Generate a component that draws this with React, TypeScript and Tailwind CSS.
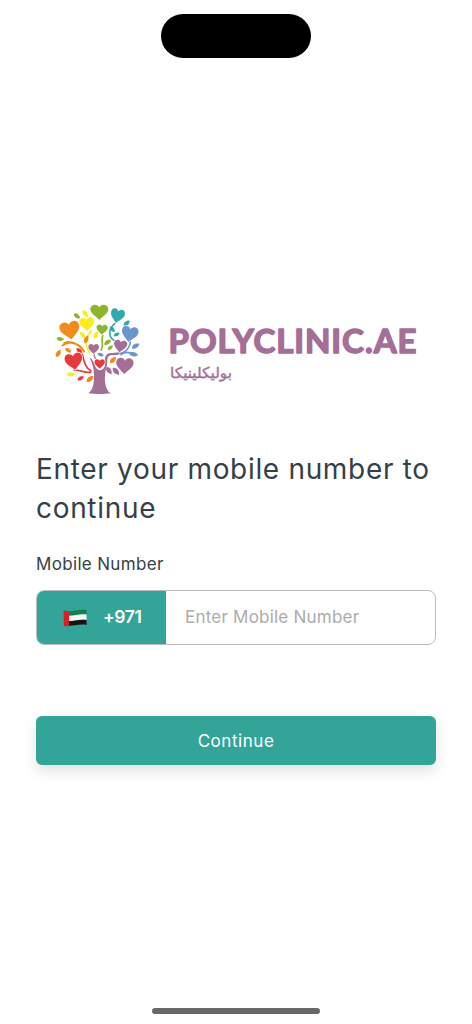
const purple = "#a56e96";

const hearts = [
  { x: 148, y: 37, w: 54, h: 46, r: 0, color: "#8fb52e" },
  { x: 202, y: 48, w: 42, h: 43, r: 12, color: "#2fabb0" },
  { x: 111, y: 73, w: 44, h: 40, r: -6, color: "#fbec1c" },
  { x: 60, y: 92, w: 60, h: 54, r: -10, color: "#ef8c1c" },
  { x: 156, y: 89, w: 34, h: 30, r: 4, color: "#8fb52e" },
  { x: 239, y: 103, w: 50, h: 47, r: 10, color: "#6b96cd" },
  { x: 131, y: 147, w: 32, h: 30, r: 0, color: purple },
  { x: 211, y: 139, w: 40, h: 37, r: 8, color: purple },
  { x: 224, y: 198, w: 52, h: 48, r: 4, color: purple },
  { x: 72, y: 185, w: 53, h: 50, r: -10, color: "#e63a3e" },
  { x: 149, y: 192, w: 31, h: 29, r: 0, color: "#e63a3e" },
];

const leaves = [
  { x: 81, y: 48, l: 23, r: 38, color: "#8fb52e" },
  { x: 106, y: 41, l: 25, r: 55, color: "#fbec1c" },
  { x: 31, y: 117, l: 23, r: 8, color: "#8fb52e" },
  { x: 98, y: 105, l: 23, r: 52, color: "#fbec1c" },
  { x: 138, y: 105, l: 24, r: -65, color: "#fbec1c" },
  { x: 187, y: 88, l: 22, r: 50, color: "#2fabb0" },
  { x: 230, y: 70, l: 24, r: -42, color: "#2fabb0" },
  { x: 200, y: 103, l: 20, r: -25, color: "#2fabb0" },
  { x: 173, y: 127, l: 24, r: -35, color: "#8fb52e" },
  { x: 181, y: 143, l: 20, r: -40, color: "#8fb52e" },
  { x: 25, y: 160, l: 25, r: -60, color: "#ef8c1c" },
  { x: 55, y: 151, l: 22, r: 35, color: "#ef8c1c" },
  { x: 109, y: 118, l: 25, r: -70, color: "#ef8c1c" },
  { x: 88, y: 152, l: 22, r: 35, color: "#e63a3e" },
  { x: 257, y: 138, l: 26, r: -30, color: "#6b96cd" },
  { x: 251, y: 163, l: 26, r: 8, color: "#6b96cd" },
  { x: 152, y: 164, l: 20, r: 20, color: "#6b96cd" },
  { x: 189, y: 180, l: 25, r: -45, color: "#ef8c1c" },
  { x: 177, y: 212, l: 26, r: 55, color: purple },
  { x: 198, y: 214, l: 28, r: 48, color: purple },
  { x: 63, y: 223, l: 25, r: 4, color: "#fbec1c" },
  { x: 92, y: 235, l: 21, r: -28, color: "#e63a3e" },
  { x: 120, y: 237, l: 26, r: -42, color: "#ef8c1c" },
];

const branches = [
  { d: "M37 137 C49 125 76 125 95 143 L103 155", color: "#ef8c1c" },
  { d: "M42 129 C65 118 89 137 98 150", color: "#ef8c1c" },
  { d: "M124 91 C110 111 99 128 119 158", color: "#fbec1c" },
  { d: "M153 150 C162 139 153 123 158 107", color: "#8fb52e" },
  { d: "M195 70 C173 88 177 112 192 121", color: "#2fabb0" },
  { d: "M241 126 C238 148 222 161 196 163", color: "#6b96cd" },
  { d: "M213 164 C225 153 242 158 253 163", color: "#6b96cd" },
  { d: "M97 163 C102 184 106 204 123 213", color: "#e63a3e" },
  { d: "M72 210 C89 210 102 218 121 217", color: "#e63a3e" },
];

function TreeLogo() {
  return (
    <svg viewBox="0 0 288 300" className="h-[100px] w-24 shrink-0" aria-hidden="true">
      {branches.map((b) => (
        <path key={b.d} d={b.d} fill="none" stroke={b.color} strokeWidth="5" strokeLinecap="round" />
      ))}
      <path
        d="M115 280 C130 269 132 249 132 225 C132 204 126 187 118 172 C128 178 133 190 137 202 C144 215 158 212 163 202 C170 191 159 175 170 164 C181 154 193 167 211 157 C203 170 189 162 177 168 C168 174 175 190 168 206 C161 233 164 269 182 280 C164 283 135 283 115 280Z"
        fill={purple}
      />
      <path d="M132 161 C132 171 137 177 143 181 M211 157 C198 163 188 158 175 164" fill="none" stroke={purple} strokeWidth="4" />
      {leaves.map((l, i) => (
        <path
          key={i}
          d="M-.5 0 C-.3 -.34 .2 -.34 .5 0 C.2 .34 -.3 .34 -.5 0Z"
          transform={`translate(${l.x} ${l.y}) rotate(${l.r}) scale(${l.l})`}
          fill={l.color}
        />
      ))}
      {hearts.map((h, i) => (
        <path
          key={i}
          d="M0 .5 C-.15 .3 -.5 .08 -.5 -.2 C-.5 -.4 -.38 -.5 -.25 -.5 C-.12 -.5 -.03 -.42 0 -.32 C.03 -.42 .12 -.5 .25 -.5 C.38 -.5 .5 -.4 .5 -.2 C.5 .08 .15 .3 0 .5Z"
          transform={`translate(${h.x} ${h.y}) rotate(${h.r}) scale(${h.w} ${h.h})`}
          fill={h.color}
          stroke="#fff"
          strokeWidth="1.2"
          vectorEffect="non-scaling-stroke"
          paintOrder="stroke"
        />
      ))}
    </svg>
  );
}

function Wordmark() {
  return (
    <svg viewBox="0 0 265 75" className="h-[75px] w-[265px] shrink-0" fill={purple}>
      <text
        x="8.500"
        y="37.5"
        textLength="248"
        lengthAdjust="spacing"
        stroke={purple}
        strokeWidth="1.5"
        strokeLinejoin="round"
        className="font-['Lato',sans-serif] text-[33px] font-bold"
      >
        POLYCLINIC.AE
      </text>
      <text
        x="72"
        y="63"
        direction="rtl"
        textLength="62"
        lengthAdjust="spacingAndGlyphs"
        stroke={purple}
        strokeWidth="0.4"
        className="font-['DejaVu_Sans',sans-serif] text-[15px]"
      >
        بوليكلينيكا
      </text>
    </svg>
  );
}

function UaeFlag() {
  return (
    <svg viewBox="0 0 24 18" className="h-[18px] w-6" aria-hidden="true">
      <path d="M1 1.5 C8 4 14 -.5 23.5 1 V6 C15 4.500 9 8.500 1 6.500Z" fill="#16804a" />
      <path d="M1 6 C9 8.500 15 4 23.500 5.500 V11 C15 9.500 9 13.500 1 11.500Z" fill="#f5f5f5" />
      <path d="M1 11.500 C9 13.500 15 9.500 23.500 11 V16 C15 14.500 9 18 1 16.500Z" fill="#151515" />
      <path d="M.5 1.500 C2.500 2.500 4 2.500 6 2.300 V17.200 C4 17.500 2.500 17 1 16.500Z" fill="#e01b22" />
    </svg>
  );
}

export default function App() {
  return (
    <div className="flex h-screen w-full flex-col overflow-hidden bg-white px-9 pt-3.5 font-['Inter',sans-serif] text-[#363f48]">
      <div className="h-11 w-[150px] shrink-0 self-center rounded-full bg-black" />

      <main className="mt-[242px] flex flex-col">
        <div className="flex h-[100px] pl-3.5">
          <TreeLogo />
          <div className="ml-3.5 pt-[15px]">
            <Wordmark />
          </div>
        </div>

        <h1 className="mt-[50px] text-[28px] leading-[39px] tracking-[0.68px] whitespace-nowrap">
          Enter your mobile number to
          <br />
          continue
        </h1>

        <label htmlFor="mobile" className="mt-6 text-[17px] leading-6 tracking-[0.33px]">
          Mobile Number
        </label>
        <div className="mt-3.5 flex h-[55px] overflow-hidden rounded-lg border-[1.5px] border-[#bdbdc1]">
          <div className="flex w-[129px] shrink-0 items-center bg-[#32a598] pl-[26px] text-white">
            <UaeFlag />
            <span className="ml-4 text-[17.500px] font-semibold tracking-[-0.4px]">+971</span>
          </div>
          <input
            id="mobile"
            type="tel"
            placeholder="Enter Mobile Number"
            className="min-w-0 flex-1 pt-px pl-[19px] text-[17px] tracking-[0.22px] outline-none placeholder:text-[#acacac]"
          />
        </div>

        <button className="mt-[71px] h-[49px] rounded-md bg-[#32a598] pt-0.5 text-[17px] tracking-[0.55px] text-white shadow-[0_6px_14px_rgba(0,0,0,0.12)]">
          Continue
        </button>
      </main>

      <div className="mt-auto mb-[10px] h-1.5 w-[168px] shrink-0 self-center rounded-full bg-[#66686a]" />
    </div>
  );
}
